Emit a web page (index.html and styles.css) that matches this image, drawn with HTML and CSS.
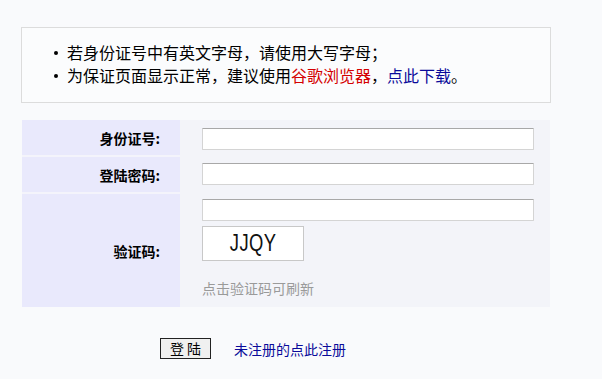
FILE: index.html
```
<!DOCTYPE html>
<html lang="zh-CN">
<head>
<meta charset="utf-8">
<title>登陆</title>
<link rel="stylesheet" href="styles.css">
</head>
<body>
<div class="page">
  <div class="notice">
    <ul class="tips">
      <li>若身份证号中有英文字母，请使用大写字母；</li>
      <li>为保证页面显示正常，建议使用<a class="red" href="#">谷歌浏览器</a>，<a class="blue" href="#">点此下载</a>。</li>
    </ul>
  </div>
  <div class="form">
    <div class="label row1">身份证号:</div>
    <div class="value row1"><input class="field" type="text"></div>
    <div class="label row2">登陆密码:</div>
    <div class="value row2"><input class="field" type="password"></div>
    <div class="label row3">验证码:</div>
    <div class="value row3">
      <input class="field" type="text">
      <div class="captcha"><span class="code">JJQY</span></div>
      <div class="hint">点击验证码可刷新</div>
    </div>
  </div>
  <div class="actions">
    <button class="btn" type="button">登 陆</button>
    <a class="reg" href="#">未注册的点此注册</a>
  </div>
</div>
</body>
</html>
```
FILE: styles.css
```
html, body {
  margin: 0;
  padding: 0;
  background: #f9fafc;
}
body {
  font-family: "Noto Sans CJK SC", "Noto Sans", sans-serif;
  font-size: 14px;
  color: #000;
}
.page {
  padding: 27px 0 0 21px;
  width: 530px;
}
.notice {
  border: 1px solid #dcdcdc;
  background: #fbfcfd;
  padding: 13px 0 15px;
}
.tips {
  margin: 0;
  padding: 0 0 0 32px;
  list-style: none;
  font-size: 16px;
  line-height: 23px;
}
.tips li {
  display: flex;
  align-items: center;
  white-space: nowrap;
}
.tips li::before {
  content: "";
  width: 4px;
  height: 4px;
  border-radius: 50%;
  background: #000;
  margin-right: 9px;
  flex: none;
}
.tips a { text-decoration: none; }
.red { color: #d40000; }
.blue { color: #0a0a9a; }
.form {
  margin: 17px 1px 0;
  display: grid;
  grid-template-columns: 158px 1fr;
  background: #f3f4f9;
}
.label {
  background: #e9e9fc;
  font-weight: bold;
  text-align: right;
  padding-right: 20px;
  display: flex;
  align-items: center;
  justify-content: flex-end;
  border-bottom: 2px solid #f4f4fb;
}
.value {
  padding: 0 0 0 22px;
}
.row1.value { padding-top: 8px; padding-bottom: 7px; }
.row2.value { padding-top: 6px; padding-bottom: 9px; }
.row3.value { padding-top: 5px; padding-bottom: 10px; }
.row3.label { border-bottom: none; }
.field {
  display: block;
  box-sizing: border-box;
  width: 332px;
  height: 22px;
  margin: 0;
  padding: 0 4px;
  background: #fff;
  border: 1px solid #d4d4d4;
  border-top-color: #a8a8a8;
  border-radius: 1px;
  font-size: 14px;
}
.captcha {
  box-sizing: border-box;
  width: 102px;
  height: 35px;
  margin-top: 5px;
  background: #fff;
  border: 1px solid #c8c8c8;
  display: flex;
  align-items: center;
  justify-content: center;
}
.code {
  display: inline-block;
  font-family: "Liberation Sans", Arial, sans-serif;
  font-size: 23px;
  color: #111;
  transform: scaleX(0.8);
  letter-spacing: 0.5px;
}
.hint {
  margin-top: 18px;
  color: #9a9a9a;
  font-size: 14px;
  line-height: 18px;
}
.actions {
  display: flex;
  align-items: center;
  padding: 31px 0 0 139px;
}
.btn {
  box-sizing: border-box;
  width: 51px;
  height: 21px;
  padding: 0;
  margin: 0;
  border: 1px solid #222;
  border-radius: 0;
  background: #f0f0f0;
  font-family: "Noto Sans CJK SC", sans-serif;
  font-size: 14px;
  line-height: 19px;
  color: #000;
}
.reg {
  margin-left: 23px;
  color: #0a0a9a;
  text-decoration: none;
  font-size: 14px;
}
```
